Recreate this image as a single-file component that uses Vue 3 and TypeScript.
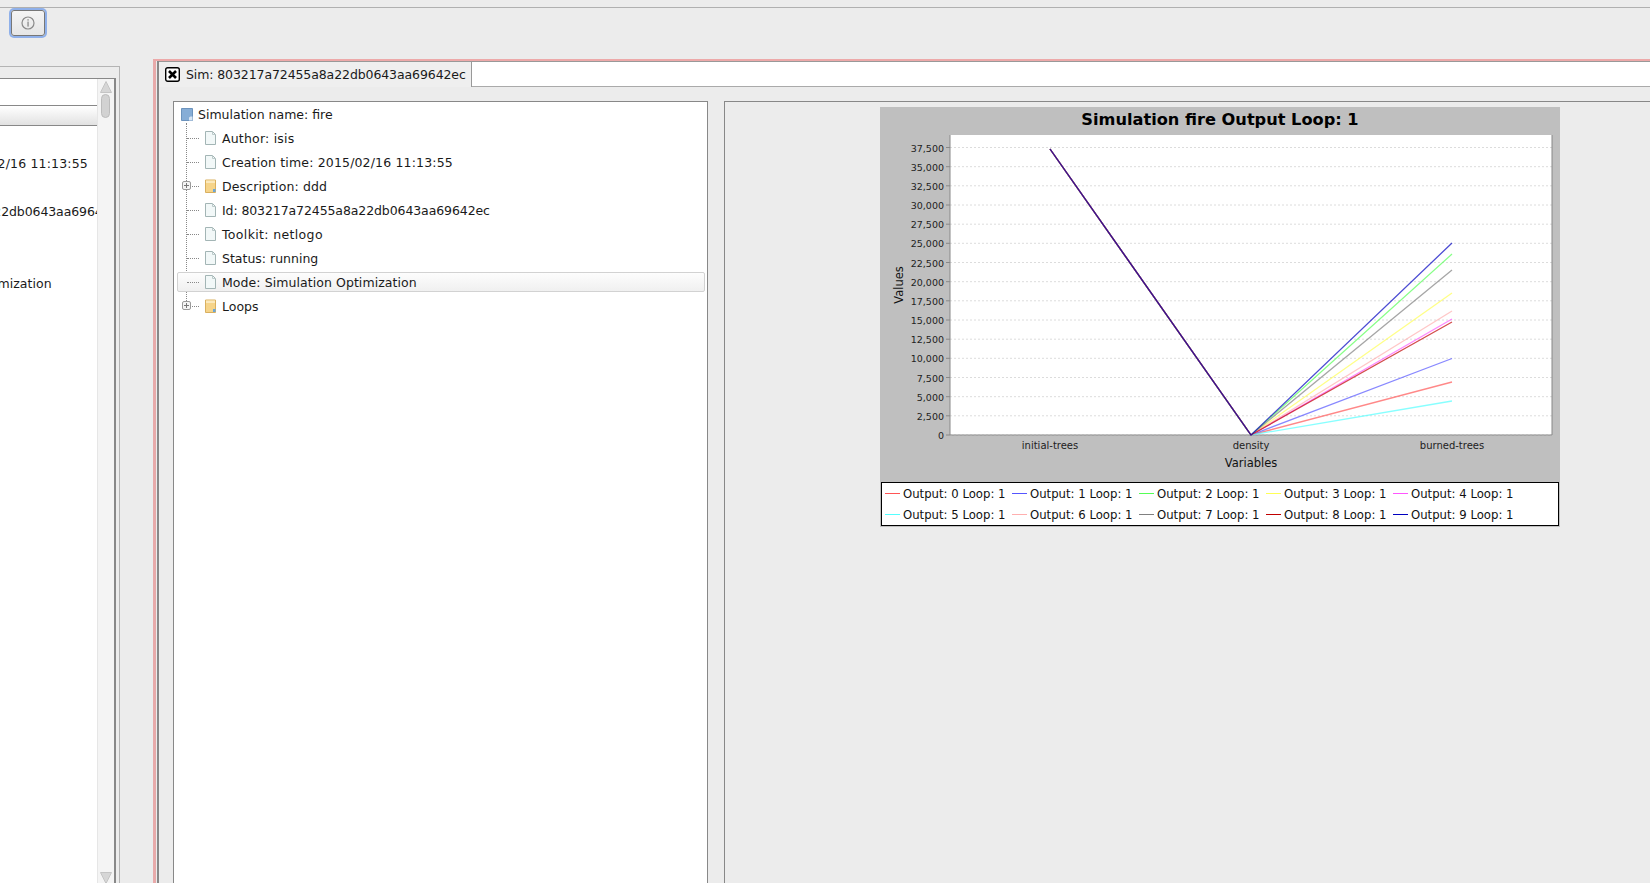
<template>
  <div class="desktop">
    <div class="top-strip" />
    <div class="toolbar">
      <button class="info-btn" type="button" aria-label="Info">
        <svg width="14" height="14" viewBox="0 0 14 14">
          <circle cx="7" cy="7" r="6" fill="none" stroke="#8a8a8a" stroke-width="1.2" />
          <rect x="6.4" y="3.2" width="1.3" height="1.4" fill="#8a8a8a" />
          <rect x="6.4" y="5.6" width="1.3" height="5" fill="#8a8a8a" />
        </svg>
      </button>
    </div>

    <div class="workspace">
      <section class="list-window">
        <div class="list-frame">
          <div class="list-body">
            <div class="list-head" />
            <div class="list-rows">
              <div
                v-for="(row, i) in listRows"
                :key="i"
                class="list-row"
                :style="{ letterSpacing: row.spacing + 'px' }"
              >
                {{ row.text }}
              </div>
            </div>
          </div>
          <div class="scrollbar">
            <svg class="arrow" width="12" height="12" viewBox="0 0 12 12">
              <path d="M6 0.5 L11.5 11.5 H0.5 Z" fill="#d6d6d6" stroke="#c4c4c4" />
            </svg>
            <div class="thumb" />
            <svg class="arrow arrow-down" width="12" height="12" viewBox="0 0 12 12">
              <path d="M6 11.5 L11.5 0.5 H0.5 Z" fill="#d6d6d6" stroke="#c4c4c4" />
            </svg>
          </div>
        </div>
      </section>

      <section class="sim-window">
        <div class="sim-inner">
          <div class="tab-strip">
            <div class="tab">
              <svg width="15" height="15" viewBox="0 0 15 15">
                <rect x="0.7" y="0.7" width="13.6" height="13.6" rx="2" fill="#fff" stroke="#000" stroke-width="1.4" />
                <path d="M4 4 L11 11 M11 4 L4 11" stroke="#000" stroke-width="2.6" />
              </svg>
              <span class="tab-label">Sim: 803217a72455a8a22db0643aa69642ec</span>
            </div>
          </div>

          <div class="sim-body">
            <div class="tree">
              <div class="tree-guide" />
              <div class="tree-root">
                <svg width="12" height="13" viewBox="0 0 12 13">
                  <path d="M0.5 0.5 H11.5 V12.5 H0.5 Z" fill="#86add6" stroke="#6c93bd" />
                  <path d="M8 12.5 V9.5 L9.5 8.5 H11.5 V12.5 Z" fill="#d8e6f4" />
                </svg>
                <span>Simulation name: fire</span>
              </div>
              <div
                v-for="node in treeNodes"
                :key="node.label"
                class="tree-row"
                :class="{ selected: node.selected }"
              >
                <svg v-if="node.folder" class="expander" width="9" height="9" viewBox="0 0 9 9">
                  <rect x="0.5" y="0.5" width="8" height="8" rx="1.5" fill="#f4f4f4" stroke="#9a9a9a" />
                  <path d="M2 4.5 H7 M4.5 2 V7" stroke="#777" />
                </svg>
                <span class="tree-link" />
                <svg v-if="node.folder" width="11" height="14" viewBox="0 0 11 14">
                  <path d="M0.5 1 H10.5 V13.5 H0.5 Z" fill="#f6d48a" stroke="#d9b060" />
                  <path d="M1 1.5 H10 V4 H1 Z" fill="#fbe9bd" />
                  <path d="M8 13 V10 H10.5 V13 Z" fill="#6aa6d8" />
                </svg>
                <svg v-else width="11" height="14" viewBox="0 0 11 14">
                  <path d="M0.5 0.5 H7.5 L10.5 3.5 V13.5 H0.5 Z" fill="#f2f8f8" stroke="#a3b5b5" />
                  <path d="M7.5 0.5 V3.5 H10.5" fill="none" stroke="#bccaca" />
                </svg>
                <span :style="{ letterSpacing: (node.spacing ?? 0) + 'px' }">{{ node.label }}</span>
              </div>
            </div>

            <div class="chart-pane">
              <div class="chart">
                <div class="chart-title">Simulation fire Output Loop: 1</div>
                <svg class="plot" width="680" height="347" viewBox="0 0 680 347">
                  <rect x="70" y="0" width="602" height="300" fill="#fff" />
                  <g v-for="tick in ticks" :key="tick.label">
                    <line x1="70" x2="672" :y1="tick.y" :y2="tick.y" class="grid-line" />
                    <line x1="66" x2="70" :y1="tick.y" :y2="tick.y" class="axis" />
                    <text x="64" :y="tick.y + 4" text-anchor="end" class="value-text">{{ tick.label }}</text>
                  </g>
                  <path d="M70 0 V300 H672 V0" fill="none" class="axis" />
                  <polyline
                    v-for="s in series"
                    :key="s.name"
                    :points="s.points"
                    fill="none"
                    :stroke="s.color"
                    stroke-opacity="0.7"
                    stroke-width="1.3"
                  />
                  <text x="170" y="314" text-anchor="middle" class="tick-text">initial-trees</text>
                  <text x="371" y="314" text-anchor="middle" class="tick-text">density</text>
                  <text x="572" y="314" text-anchor="middle" class="tick-text">burned-trees</text>
                  <text x="371" y="332" text-anchor="middle" class="axis-text">Variables</text>
                  <text transform="translate(23 150) rotate(-90)" text-anchor="middle" class="axis-text">Values</text>
                </svg>
                <div class="legend">
                  <div v-for="s in series" :key="s.name" class="legend-item">
                    <i class="swatch" :style="{ background: s.color }" />
                    <span>{{ s.name }}</span>
                  </div>
                </div>
              </div>
            </div>
          </div>
        </div>
      </section>
    </div>
  </div>
</template>

<script setup lang="ts">
import { computed } from 'vue'

interface TreeNode {
  label: string
  folder?: boolean
  selected?: boolean
  spacing?: number
}

// blank rows are cut off by the left edge of the window
const listRows = [
  { text: 'Creation time: 2015/02/16 11:13:55', spacing: 0.16 },
  { text: '', spacing: 0 },
  { text: 'Id: 803217a72455a8a22db0643aa69642ec', spacing: -0.1 },
  { text: '', spacing: 0 },
  { text: '', spacing: 0 },
  { text: 'Mode: Simulation Optimization', spacing: 0.07 },
]

const treeNodes: TreeNode[] = [
  { label: 'Author: isis', spacing: 0.2 },
  { label: 'Creation time: 2015/02/16 11:13:55', spacing: 0.16 },
  { label: 'Description: ddd', folder: true, spacing: 0.12 },
  { label: 'Id: 803217a72455a8a22db0643aa69642ec', spacing: -0.1 },
  { label: 'Toolkit: netlogo', spacing: 0.35 },
  { label: 'Status: running' },
  { label: 'Mode: Simulation Optimization', selected: true, spacing: 0.07 },
  { label: 'Loops', folder: true },
]

const PX_PER_UNIT = 287.5 / 37500
const toY = (v: number) => +(300 - v * PX_PER_UNIT).toFixed(1)

const ticks = computed(() =>
  Array.from({ length: 16 }, (_, i) => {
    const v = i * 2500
    return { label: v.toLocaleString('en-US'), y: toY(v) }
  }),
)

const raw = [
  { id: 0, burned: 6910, color: '#ff5555' },
  { id: 1, burned: 9980, color: '#5555ff' },
  { id: 2, burned: 23600, color: '#55ff55' },
  { id: 3, burned: 18520, color: '#ffff55' },
  { id: 4, burned: 15130, color: '#ff55ff' },
  { id: 5, burned: 4430, color: '#55ffff' },
  { id: 6, burned: 16170, color: '#ffafaf' },
  { id: 7, burned: 21520, color: '#808080' },
  { id: 8, burned: 14740, color: '#c00000' },
  { id: 9, burned: 25043, color: '#0000c0' },
]

const series = computed(() =>
  raw.map((s) => ({
    ...s,
    name: `Output: ${s.id} Loop: 1`,
    points: `170,${toY(37300)} 371,${toY(0)} 572,${toY(s.burned)}`,
  })),
)
</script>

<style scoped>
.desktop {
  width: 1650px;
  height: 883px;
  overflow: hidden;
  display: flex;
  flex-direction: column;
  background: #ececec;
  color: #1a1a1a;
  font-family: "DejaVu Sans", "Liberation Sans", sans-serif;
  font-size: 12.5px;
}

.top-strip {
  height: 7px;
  flex: none;
  border-bottom: 1px solid #b0b0b0;
}

.toolbar {
  flex: none;
  padding: 2px 0 0 11px;
}

.info-btn {
  display: flex;
  align-items: center;
  justify-content: center;
  width: 34px;
  height: 26px;
  padding: 0;
  box-sizing: border-box;
  background: linear-gradient(#f4f4f4, #e6e6e6);
  border: 1px solid #777;
  border-radius: 3px;
  box-shadow: 0 0 0 2px #8fb0ea;
}

.workspace {
  flex: 1;
  min-height: 0;
  display: flex;
  margin-top: 23px;
}

/* left window, mostly scrolled out of the picture */
.list-window {
  flex: none;
  width: 120px;
  margin-top: 7px;
  padding-top: 11px;
  box-sizing: border-box;
  border-top: 1px solid #b4b4b4;
  border-right: 1px solid #b4b4b4;
}

.list-frame {
  display: flex;
  height: 100%;
  width: 116px;
  box-sizing: border-box;
  background: #fff;
  border-top: 1px solid #888;
  border-right: 2px solid #888;
}

.list-body {
  flex: 1;
  min-width: 0;
  overflow: hidden;
}

.list-head {
  height: 21px;
  margin-top: 26px;
  box-sizing: border-box;
  background: linear-gradient(#fff, #e2e2e2);
  border-top: 1px solid #888;
  border-bottom: 1px solid #888;
}

.list-rows {
  margin-top: 26px;
  margin-left: -143px;
}

.list-row {
  height: 24px;
  line-height: 24px;
  white-space: nowrap;
}

.scrollbar {
  flex: none;
  position: relative;
  width: 16px;
  background: #f4f4f4;
  border-left: 1px solid #e6e6e6;
}

.arrow {
  display: block;
  margin: 2px 0 0 2px;
}

.arrow-down {
  position: absolute;
  left: 0;
  bottom: -1px;
}

.thumb {
  width: 9px;
  height: 24px;
  margin: 1px 0 0 3px;
  box-sizing: border-box;
  background: #d2d2d2;
  border: 1px solid #bcbcbc;
  border-radius: 5px;
}

/* right window */
.sim-window {
  flex: 1;
  min-width: 0;
  margin-left: 33px;
  padding: 0 0 0 1px;
  border-top: 2px solid #eda9a9;
  border-left: 3px solid #e8aaaa;
}

.sim-inner {
  display: flex;
  flex-direction: column;
  height: 100%;
  border-left: 2px solid #888;
}

.tab-strip {
  flex: none;
  display: flex;
  height: 26px;
  box-sizing: border-box;
  background: #fff;
  border-top: 1px solid #999;
  border-bottom: 1px solid #aaa;
}

.tab {
  display: flex;
  align-items: center;
  gap: 6px;
  width: 313px;
  height: 25px;
  padding-left: 6px;
  box-sizing: border-box;
  background: #efefef;
  border-right: 1px solid #999;
  white-space: nowrap;
}

.tab-label {
  letter-spacing: -0.1px;
}

.sim-body {
  flex: 1;
  min-height: 0;
  display: flex;
  gap: 16px;
  padding: 14px 0 0 14px;
}

.tree {
  flex: none;
  position: relative;
  width: 535px;
  box-sizing: border-box;
  background: #fff;
  border: 1px solid #888;
  border-bottom: 0;
}

.tree-guide {
  position: absolute;
  left: 12px;
  top: 21px;
  height: 180px;
  border-left: 1px dotted #888;
}

.tree-root {
  display: flex;
  align-items: center;
  gap: 5px;
  height: 24px;
  padding-left: 7px;
  white-space: nowrap;
}

.tree-row {
  position: relative;
  display: flex;
  align-items: center;
  gap: 6px;
  height: 24px;
  margin: 0 2px 0 3px;
  padding-left: 10px;
  white-space: nowrap;
}

.tree-row.selected {
  box-sizing: border-box;
  height: 20px;
  margin-top: 2px;
  margin-bottom: 2px;
  padding-left: 9px;
  background: linear-gradient(#fdfdfd, #f0f0f0);
  border: 1px solid #d2d2d2;
  border-radius: 2px;
}

.tree-link {
  width: 12px;
  border-bottom: 1px dotted #888;
}

.expander {
  position: absolute;
  left: 5px;
  top: 7px;
}

.chart-pane {
  flex: 1;
  min-width: 0;
  padding: 5px 0 0 155px;
  border-top: 1px solid #888;
  border-left: 1px solid #888;
}

.chart {
  width: 680px;
  height: 420px;
  background: #bfbfbf;
}

.chart-title {
  height: 28px;
  line-height: 25px;
  text-align: center;
  font-size: 16.2px;
  font-weight: 700;
  color: #000;
}

.plot {
  display: block;
}

.grid-line {
  stroke: #dcdcdc;
  stroke-width: 1;
  stroke-dasharray: 2 2;
}

.axis {
  stroke: #888;
  stroke-width: 1;
}

.tick-text {
  font-size: 10px;
  fill: #222;
}

.value-text {
  font-size: 9.5px;
  fill: #222;
}

.axis-text {
  font-size: 11.5px;
  fill: #111;
}

.legend {
  display: grid;
  grid-template-columns: repeat(5, 127px);
  grid-auto-rows: 21px;
  width: 678px;
  height: 44px;
  margin-left: 1px;
  padding-left: 3px;
  box-sizing: border-box;
  align-items: center;
  background: #fff;
  border: 1px solid #000;
  font-size: 11.7px;
  color: #111;
}

.legend-item {
  display: flex;
  align-items: center;
  gap: 3px;
  white-space: nowrap;
}

.swatch {
  width: 15px;
  height: 1px;
}
</style>

<style>
body {
  overflow: hidden;
}
</style>
